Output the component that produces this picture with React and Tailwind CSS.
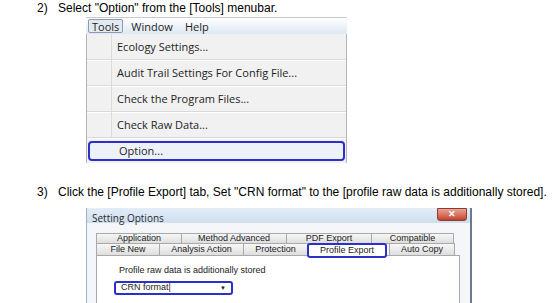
import React from 'react';

const menuItems = [
  'Ecology Settings...',
  'Audit Trail Settings For Config File...',
  'Check the Program Files...',
  'Check Raw Data...',
];

const tabsTop = [
  { label: 'Application', w: 'w-[86px]' },
  { label: 'Method Advanced', w: 'w-[106px]' },
  { label: 'PDF Export', w: 'w-[86px]' },
  { label: 'Compatible', w: 'w-[83px]' },
];

const tabsBottom = [
  { label: 'File New', w: 'w-[64px]' },
  { label: 'Analysis Action', w: 'w-[85px]' },
  { label: 'Protection', w: 'w-[65px]' },
];

const Tab = ({ label, w }) => (
  <div
    className={`${w} h-full flex items-center justify-center border border-[#a9a9a9] -ml-px first:ml-0 bg-gradient-to-b from-[#f7f7f7] to-[#dedede] text-[9px] text-[#222]`}
  >
    {label}
  </div>
);

// Tools menu capture
const ToolsMenu = () => (
  <div className="ml-[86px] mt-[2px] w-[261px] font-['Open_Sans',sans-serif] text-[11px] text-[#1e1e1e]">
    {/* menubar */}
    <div className="h-[17px] flex items-center gap-[8px] pl-[2px] border-t border-[#c9c9c9] bg-gradient-to-b from-[#ffffff] to-[#dde7f3]">
      <div className="h-[14px] px-[3px] flex items-center border border-[#8a9bb3] rounded-[2px] bg-[#e4eaf2] leading-none">
        Tools
      </div>
      <span className="leading-none">Window</span>
      <span className="ml-[4px] leading-none">Help</span>
    </div>
    {/* dropdown panel */}
    <div className="border-l border-r border-[#b5b5b5] bg-[#f1f1f1] pb-[2px]">
      {menuItems.map((item) => (
        <div key={item} className="flex h-[26px] border-b border-[#d9d9d9] shadow-[0_1px_0_#ffffff]">
          <div className="w-[25px] border-r border-[#dcdcdc]" />
          <div className="flex items-center pl-[5px] pt-[1px]">{item}</div>
        </div>
      ))}
      <div className="mx-[1px] mt-[3px] h-[20px] flex items-center pl-[29px] border-2 border-[#2c2fc8] rounded-[4px] bg-[#edf1f8]">
        Option...
      </div>
    </div>
  </div>
);

// Setting Options dialog capture
const SettingDialog = () => (
  <div className="ml-[86px] mt-[9px] w-[386px] h-[100px] flex flex-col border-l border-[#9fb0c4] border-r-2 border-r-[#6d7a89] bg-[#f4f6f9]">
    {/* title bar */}
    <div className="h-[20px] flex items-start justify-between bg-gradient-to-b from-[#e3edf8] to-[#cfdeef]">
      <span className="pl-[5px] pt-[5px] text-[10px] leading-none text-[#2a2a2a] font-['Open_Sans',sans-serif]">
        Setting Options
      </span>
      <div className="mr-[3px] w-[30px] h-[13px] flex items-center justify-center rounded-b-[3px] border border-[#8f3a2e] bg-gradient-to-b from-[#e8a496] to-[#c3412a] text-white text-[9px] font-bold leading-none">
        ✕
      </div>
    </div>
    <div className="flex-1 pl-[9px] pt-[10px] font-['Liberation_Sans',sans-serif]">
      <div className="h-[11px] flex">
        {tabsTop.map((t) => (
          <Tab key={t.label} {...t} />
        ))}
      </div>
      <div className="h-[13px] flex -mt-px">
        {tabsBottom.map((t) => (
          <Tab key={t.label} {...t} />
        ))}
        <div className="w-[80px] -ml-px h-[15px] flex items-center justify-center border-2 border-[#2c2fc8] rounded-[3px] bg-white text-[9px] text-[#222] relative z-10">
          Profile Export
        </div>
        <div className="ml-[2px]">
          <Tab label="Auto Copy" w="w-[66px]" />
        </div>
      </div>
      <div className="w-[364px] h-[60px] -mt-px border border-[#a9a9a9] bg-white pl-[22px] pt-[9px]">
        <div className="text-[9px] leading-[10px] text-[#222]">Profile raw data is additionally stored</div>
        <div className="mt-[6px] ml-[-5px] w-[119px] h-[14px] flex items-center justify-between pl-[5px] pr-[5px] border-2 border-[#2c2fc8] rounded-[3px] bg-white text-[9px] text-[#222]">
          <span>CRN format|</span>
          <span className="text-[6px] leading-none">▼</span>
        </div>
      </div>
    </div>
  </div>
);

export default function App() {
  return (
    <div className="w-[554px] h-[303px] overflow-hidden bg-white font-['Liberation_Sans',sans-serif] text-black">
      <div className="flex pl-[37px] h-[15px] items-center text-[12px] leading-none">
        <span className="w-[21px]">2)</span>
        <span>Select "Option" from the [Tools] menubar.</span>
      </div>
      <ToolsMenu />
      <div className="flex pl-[37px] mt-[21px] h-[15px] items-center text-[12px] leading-none">
        <span className="w-[21px]">3)</span>
        <span>Click the [Profile Export] tab, Set "CRN format" to the [profile raw data is additionally stored].</span>
      </div>
      <SettingDialog />
    </div>
  );
}
